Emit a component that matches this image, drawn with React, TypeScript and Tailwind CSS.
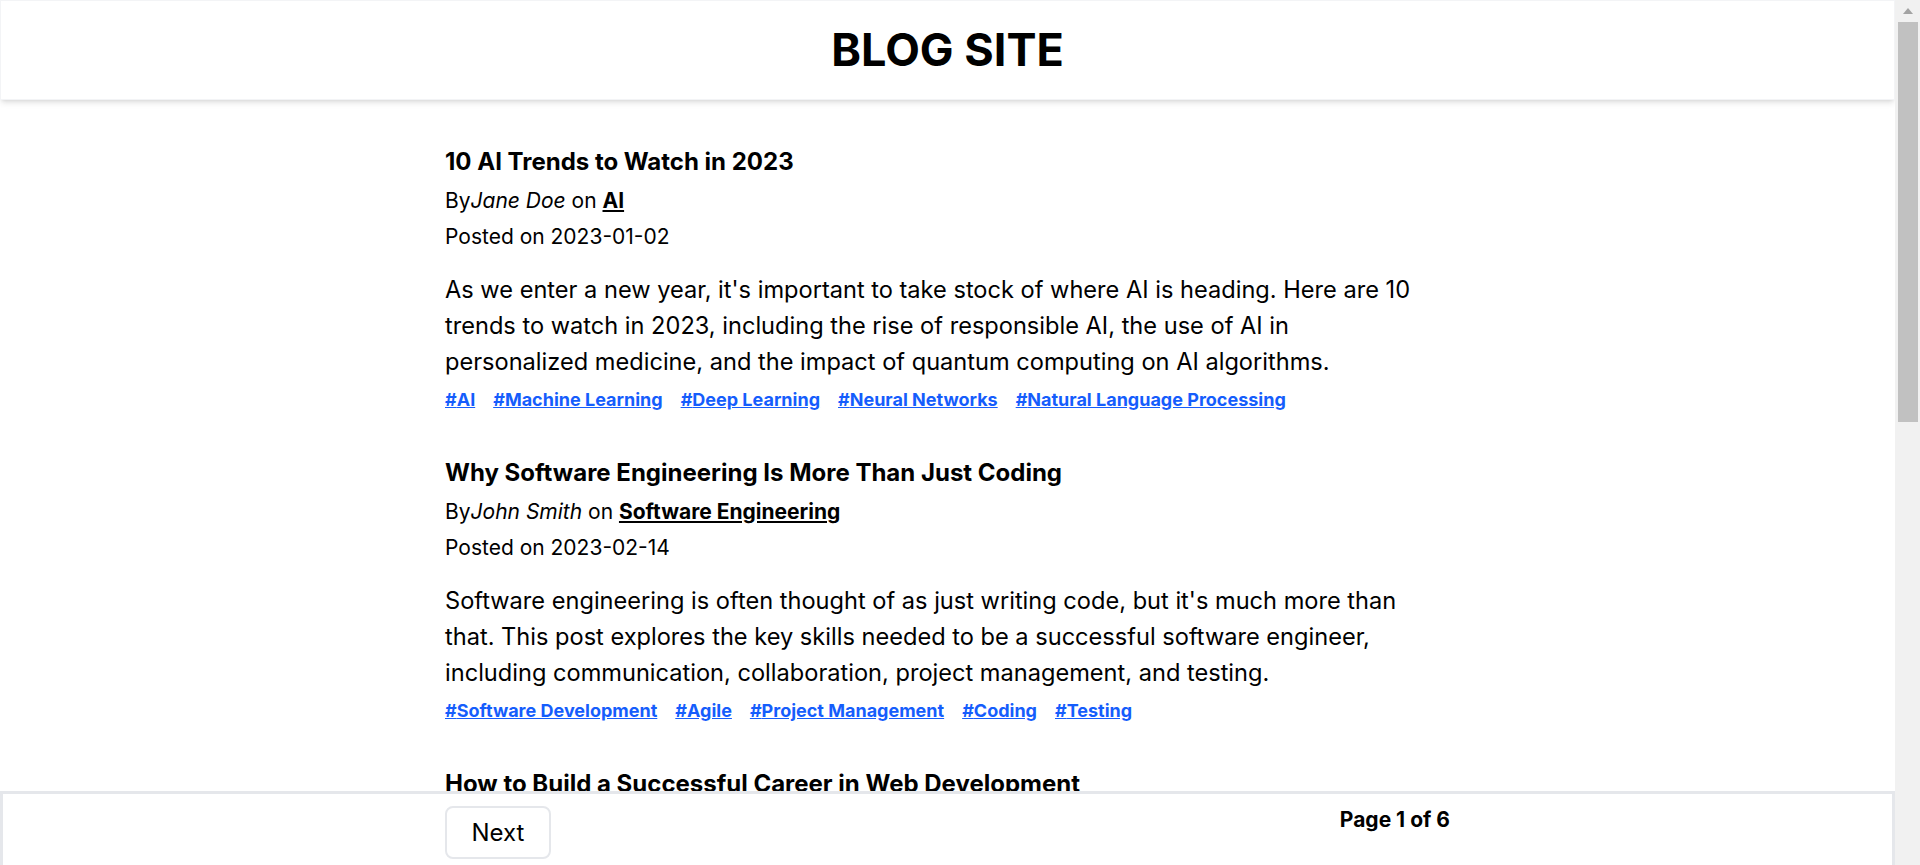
const posts = [
  {
    title: '10 AI Trends to Watch in 2023',
    author: 'Jane Doe',
    category: 'AI',
    date: '2023-01-02',
    body: "As we enter a new year, it's important to take stock of where AI is heading. Here are 10 trends to watch in 2023, including the rise of responsible AI, the use of AI in personalized medicine, and the impact of quantum computing on AI algorithms.",
    tags: ['AI', 'Machine Learning', 'Deep Learning', 'Neural Networks', 'Natural Language Processing'],
  },
  {
    title: 'Why Software Engineering Is More Than Just Coding',
    author: 'John Smith',
    category: 'Software Engineering',
    date: '2023-02-14',
    body: "Software engineering is often thought of as just writing code, but it's much more than that. This post explores the key skills needed to be a successful software engineer, including communication, collaboration, project management, and testing.",
    tags: ['Software Development', 'Agile', 'Project Management', 'Coding', 'Testing'],
  },
  {
    title: 'How to Build a Successful Career in Web Development',
    author: 'Emily Johnson',
    category: 'Web Development',
    date: '2023-03-08',
    body: "Web development is a fast-moving field with plenty of opportunity. In this post we look at the skills, tools and habits that help developers grow their careers, from mastering the fundamentals to building a portfolio that stands out.",
    tags: ['Web Development', 'Career', 'JavaScript', 'Frontend', 'Portfolio'],
  },
];

type Post = (typeof posts)[number];

function PostCard({ post }: { post: Post }) {
  return (
    <article className="mb-[43px]">
      <h2 className="text-2xl leading-8 font-bold">{post.title}</h2>
      <p className="mt-[9px] text-[21px] leading-7">
        By<i>{post.author}</i> on{' '}
        <a href="#" className="font-bold underline">{post.category}</a>
      </p>
      <p className="mt-2 text-[21px] leading-7">Posted on {post.date}</p>
      <p className="mt-[21px] pr-[14px] text-[23.6px] leading-9">{post.body}</p>
      <div className="mt-[6px] flex flex-wrap gap-x-[18px] text-lg leading-7 font-bold">
        {post.tags.map((t) => (
          <a key={t} href="#" className="text-blue-600 underline">#{t}</a>
        ))}
      </div>
    </article>
  );
}

// stand-in for the browser's scrollbar strip seen in the reference
function ScrollStrip() {
  return (
    <div className="fixed top-0 right-0 bottom-0 w-[25px] bg-[#f1f1f1] flex flex-col items-center">
      <div className="h-[22px] w-full flex items-center justify-center">
        <svg width="10" height="6" viewBox="0 0 10 6">
          <path d="M5 0L10 6H0Z" fill="#a3a3a3" />
        </svg>
      </div>
      <div className="w-[20px] h-[400px] bg-[#c1c1c1]" />
    </div>
  );
}

export default function App() {
  return (
    <div className="min-h-screen bg-white text-black font-['Inter',sans-serif] pr-[25px]">
      <header className="h-[100px] flex items-center justify-center bg-white border border-gray-100 shadow-md">
        <h1 className="text-[45px] font-bold">BLOG SITE</h1>
      </header>

      <main className="max-w-[1005px] mx-auto pt-[46px] pb-[120px]">
        {posts.map((p) => (
          <PostCard key={p.title} post={p} />
        ))}
      </main>

      <footer className="fixed bottom-0 left-0 right-[25px] h-[74px] bg-white border-t-[3px] border-x-[3px] border-gray-200">
        <div className="max-w-[1005px] mx-auto pt-3 flex items-start justify-between">
          <button className="w-[106px] h-[53px] rounded-lg border-2 border-gray-200 bg-white text-2xl">
            Next
          </button>
          <span className="text-[21px] leading-7 font-bold">Page 1 of 6</span>
        </div>
      </footer>

      <ScrollStrip />
    </div>
  );
}
